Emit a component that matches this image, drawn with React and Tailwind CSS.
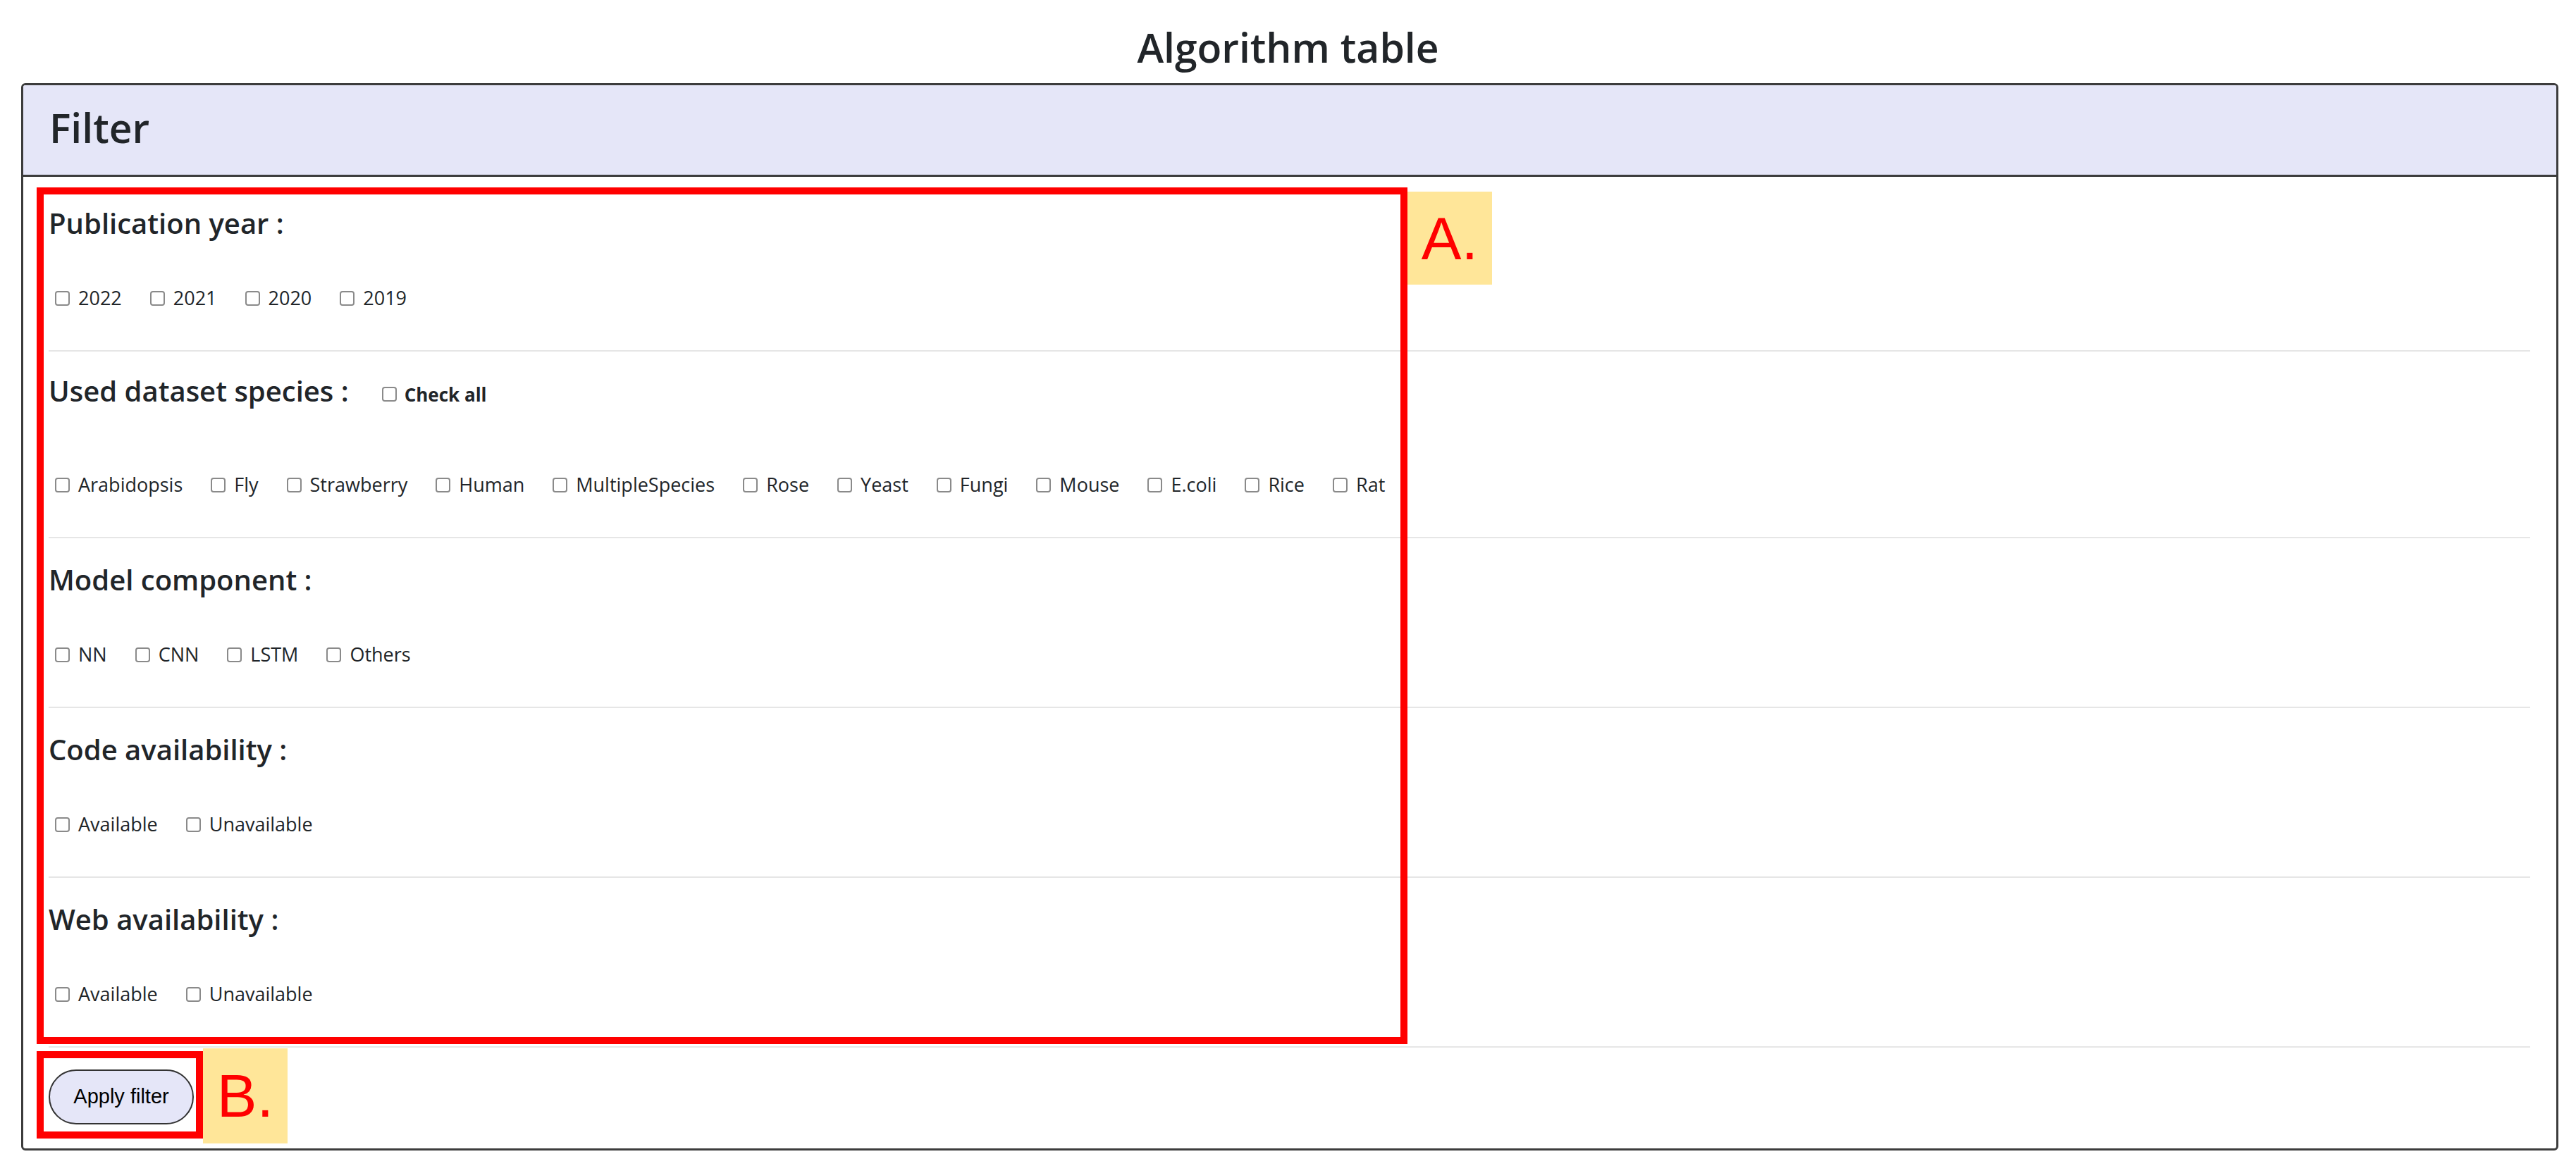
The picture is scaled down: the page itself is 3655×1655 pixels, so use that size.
import React from "react";

const SECTIONS = [
  { title: "Publication year :", items: ["2022", "2021", "2020", "2019"] },
  {
    title: "Used dataset species :",
    checkAll: true,
    items: [
      "Arabidopsis",
      "Fly",
      "Strawberry",
      "Human",
      "MultipleSpecies",
      "Rose",
      "Yeast",
      "Fungi",
      "Mouse",
      "E.coli",
      "Rice",
      "Rat",
    ],
  },
  { title: "Model component :", items: ["NN", "CNN", "LSTM", "Others"] },
  { title: "Code availability :", items: ["Available", "Unavailable"] },
  { title: "Web availability :", items: ["Available", "Unavailable"] },
];

function Box({ className = "" }) {
  return (
    <span
      className={`inline-block h-[21px] w-[21px] shrink-0 rounded-[4px] border-2 border-[#8a8a8a] bg-white ${className}`}
    />
  );
}

function Section({ section }) {
  const tall = section.checkAll;
  return (
    <div
      className={`border-b-2 border-[#e6e6e6] pb-[54px] ${tall ? "pt-[32px]" : "pt-[35px]"}`}
    >
      <div className={`flex items-baseline ${tall ? "h-[75px]" : "h-[48px]"}`}>
        <h5 className="text-[40px] leading-[48px] font-semibold">{section.title}</h5>
        {section.checkAll && (
          <label className="ml-[38px] inline-flex items-center text-[26px] leading-[36px] font-bold">
            <Box className="ml-[9px] mr-[11px]" />
            Check all
          </label>
        )}
      </div>
      <div className="mt-[62px] flex h-[40px] items-center text-[27px] leading-[40px]">
        {section.items.map((item, idx) => (
          <label key={idx} className="mr-[31px] flex items-center">
            <Box className="ml-[9px] mr-[12px]" />
            {item}
          </label>
        ))}
      </div>
    </div>
  );
}

export default function App() {
  return (
    <div className="relative min-h-[1655px] w-full bg-white font-['Open_Sans',sans-serif] text-[#212529]">
      <h3 className="pt-[32px] text-center text-[57px] leading-[70px] font-semibold">
        Algorithm table
      </h3>

      {/* CARD */}
      <div className="mt-[16px] ml-[30px] mr-[25px] overflow-hidden rounded-[6px] border-[3px] border-[#3c3c3c]">
        <div className="h-[130px] border-b-[3px] border-[#3c3c3c] bg-[#e5e6f8] pt-[25px] pl-[37px]">
          <h4 className="text-[57px] leading-[70px] font-semibold">Filter</h4>
        </div>

        <div className="pl-[36px] pr-[37px] pt-[7px]">
          {SECTIONS.map((s, idx) => (
            <Section key={idx} section={s} />
          ))}
          <div className="pt-[31px] pb-[34px]">
            <button className="flex h-[78px] w-[206px] items-center justify-center rounded-full border-2 border-[#333] bg-[#e5e6f8] font-['Liberation_Sans',Arial,sans-serif] text-[29px] text-black">
              Apply filter
            </button>
          </div>
        </div>
      </div>

      {/* ANNOTATIONS */}
      <div className="absolute left-[52px] top-[266px] h-[1216px] w-[1945px] border-[10px] border-[#ff0000]" />
      <div className="absolute left-[1997px] top-[272px] flex h-[132px] w-[120px] items-center justify-center bg-[#ffe699] font-['Liberation_Sans',Arial,sans-serif] text-[85px] leading-none text-[#ff0000]">
        A.
      </div>
      <div className="absolute left-[52px] top-[1492px] h-[124px] w-[236px] border-[10px] border-[#ff0000]" />
      <div className="absolute left-[288px] top-[1488px] flex h-[135px] w-[120px] items-center justify-center bg-[#ffe699] font-['Liberation_Sans',Arial,sans-serif] text-[85px] leading-none text-[#ff0000]">
        B.
      </div>
    </div>
  );
}
